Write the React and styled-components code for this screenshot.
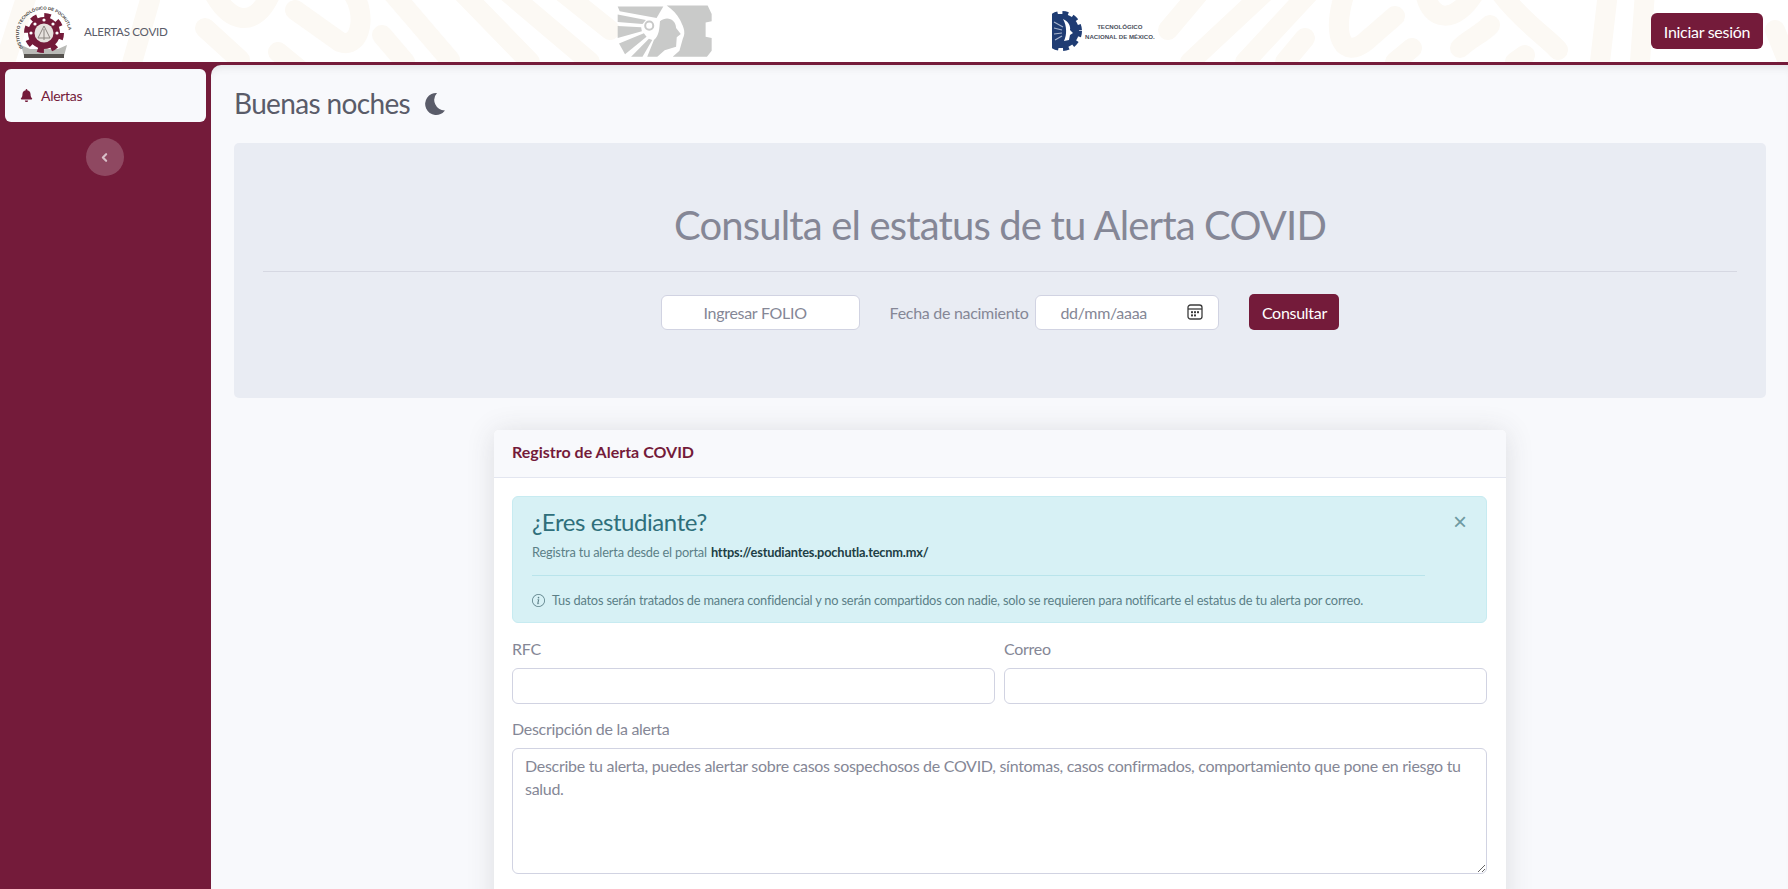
import React from 'react';
import styled, { createGlobalStyle } from 'styled-components';
import { FaBell } from 'react-icons/fa';
import { BsInfoCircle } from 'react-icons/bs';
import { ChevronLeft } from 'lucide-react';

const CRIMSON = '#741b3a';
const FONT = '"Lato", "Noto Sans", "Liberation Sans", sans-serif';
const TRACKING = '-0.018em';

const GlobalStyle = createGlobalStyle`
  * { box-sizing: border-box; }
  html, body { margin: 0; padding: 0; height: 100%; overflow: hidden; }
  body { font-family: ${FONT}; letter-spacing: ${TRACKING}; background: #f8f9fc; color: #858796; }
`;

const Page = styled.div`
  display: flex;
  flex-direction: column;
  height: 889px;
  overflow: hidden;
`;

const Header = styled.header`
  position: relative;
  flex: 0 0 65px;
  display: grid;
  grid-template-columns: 617px 435px 1fr auto;
  align-items: center;
  padding-right: 25px;
  background: #fff;
  border-bottom: 3px solid ${CRIMSON};
  overflow: hidden;
`;

const Pattern = styled.svg`
  position: absolute;
  inset: 0;
  width: 100%;
  height: 62px;
`;

const Brand = styled.div`
  position: relative;
  display: flex;
  align-items: center;
  gap: 10px;
  padding-left: 14px;
  font-size: 11.6px;
  color: #5a5c69;
`;

const LogoSlot = styled.div`
  position: relative;
  display: flex;
  align-items: center;
  gap: 3px;
`;

const TecText = styled.div`
  display: flex;
  flex-direction: column;
  align-items: center;
  gap: 3px;
  font-family: "Liberation Sans", sans-serif;
  font-size: 6.1px;
  font-weight: 700;
  line-height: 7px;
  letter-spacing: 0;
  color: #4a4f5c;
`;

const LoginButton = styled.button`
  position: relative;
  grid-column: 4;
  width: 112px;
  height: 36px;
  border: 0;
  border-radius: 6px;
  background: ${CRIMSON};
  color: #fff;
  font-family: ${FONT};
  font-size: 16px;
  letter-spacing: ${TRACKING};
`;

const Body = styled.div`
  flex: 1;
  display: flex;
  min-height: 0;
  background: ${CRIMSON};
`;

const Sidebar = styled.aside`
  flex: 0 0 211px;
  display: flex;
  flex-direction: column;
  align-items: center;
  padding: 4px 5px 0;
`;

const NavItem = styled.div`
  align-self: stretch;
  display: flex;
  align-items: center;
  gap: 8px;
  height: 53px;
  padding-left: 15px;
  border-radius: 6px;
  background: #f8f9fc;
  color: ${CRIMSON};
  font-size: 14px;
`;

const Toggle = styled.button`
  display: flex;
  align-items: center;
  justify-content: center;
  width: 38px;
  height: 38px;
  margin-top: 16px;
  margin-right: 2px;
  padding: 0;
  border: 0;
  border-radius: 50%;
  background: rgba(255, 255, 255, 0.2);
  color: rgba(255, 255, 255, 0.65);
`;

const Main = styled.main`
  flex: 1;
  min-width: 0;
  padding: 21px 22px 0 23px;
  border-top-left-radius: 10px;
  background: #f8f9fc;
  box-shadow: inset 0 8px 8px -6px rgba(58, 59, 69, 0.12);
`;

const Greeting = styled.h3`
  display: flex;
  align-items: center;
  gap: 14px;
  height: 34px;
  margin: 0 0 23px;
  font-size: 28px;
  font-weight: 400;
  letter-spacing: -0.65px;
  color: #5a5c69;
`;

const Jumbotron = styled.section`
  height: 255px;
  padding: 58px 29px 0;
  border-radius: 5px;
  background: #e9ecf3;
`;

const Title = styled.h1`
  margin: 0;
  font-size: 40px;
  font-weight: 400;
  line-height: 48px;
  letter-spacing: -0.85px;
  text-align: center;
  color: #858796;
`;

const Rule = styled.hr`
  margin: 22px 0;
  border: 0;
  border-top: 1px solid #d6d8e2;
`;

const SearchRow = styled.div`
  display: flex;
  align-items: center;
  justify-content: center;
`;

const inputBase = `
  border: 1px solid #d1d3e2;
  border-radius: 6px;
  background: #fff;
  font-family: ${FONT};
  font-size: 16px;
  letter-spacing: ${TRACKING};
  color: #6e707e;
  outline: none;
  &::placeholder { color: #858796; opacity: 1; }
`;

const FolioInput = styled.input`
  ${inputBase}
  width: 199px;
  height: 35px;
  padding-right: 12px;
  text-align: center;
`;

const DateLabel = styled.label`
  margin: 0 7px 0 30px;
  font-size: 16px;
  color: #858796;
`;

const DateBox = styled.div`
  ${inputBase}
  display: flex;
  align-items: center;
  justify-content: space-between;
  width: 184px;
  height: 35px;
  padding: 0 15px 0 24px;
  color: #858796;
`;

const SearchButton = styled.button`
  width: 90px;
  height: 36px;
  margin-left: 30px;
  border: 0;
  border-radius: 5px;
  background: ${CRIMSON};
  color: #fff;
  font-family: ${FONT};
  font-size: 16px;
  letter-spacing: ${TRACKING};
`;

const Card = styled.section`
  width: 1012px;
  margin: 32px auto 0;
  border-radius: 5px;
  background: #fff;
  box-shadow: 0 2px 28px rgba(58, 59, 69, 0.15);
`;

const CardHeader = styled.div`
  display: flex;
  align-items: center;
  height: 48px;
  padding: 0 0 4px 18px;
  border-bottom: 1px solid #e3e6f0;
  border-radius: 5px 5px 0 0;
  background: #f8f9fc;
  font-size: 16px;
  font-weight: 700;
  letter-spacing: 0;
  color: ${CRIMSON};
`;

const CardBody = styled.div`
  padding: 18px 19px 40px 18px;
`;

const Alert = styled.div`
  position: relative;
  height: 127px;
  padding: 10px 61px 0 19px;
  border: 1px solid #c7ebf1;
  border-radius: 6px;
  background: #d7f1f5;
  color: #5b7f87;
  font-size: 12.8px;
  letter-spacing: -0.0145em;
`;

const AlertTitle = styled.h4`
  margin: 0 0 8px;
  font-size: 24px;
  font-weight: 400;
  line-height: 29px;
  letter-spacing: ${TRACKING};
  color: #2f6f7b;
`;

const AlertLine = styled.p`
  display: flex;
  align-items: center;
  gap: 7px;
  margin: 0;
  line-height: 16px;

  strong { margin-left: -3px; color: #1d3f46; }
`;

const AlertRule = styled.hr`
  margin: 15px 0 16px;
  border: 0;
  border-top: 1px solid #b9e4eb;
`;

const CloseButton = styled.button`
  position: absolute;
  top: 15px;
  right: 19px;
  padding: 0;
  border: 0;
  background: none;
  color: #6f9aa2;
  font-family: "Liberation Sans", sans-serif;
  font-size: 24px;
  line-height: 20px;
`;

const FieldGrid = styled.div`
  display: grid;
  grid-template-columns: 1fr 1fr;
  gap: 9px;
  margin-top: 14px;
`;

const FieldLabel = styled.label`
  display: block;
  margin-bottom: 7px;
  font-size: 16px;
  line-height: 24px;
  color: #858796;
`;

const TextInput = styled.input`
  ${inputBase}
  width: 100%;
  height: 36px;
`;

const DescriptionBlock = styled.div`
  margin-top: 13px;
`;

const Description = styled.textarea`
  ${inputBase}
  display: block;
  width: 100%;
  height: 126px;
  padding: 5px 12px;
  line-height: 23px;
  resize: vertical;
`;

const MoonIcon = () => (
  <svg width="22" height="23" viewBox="0 0 22 23">
    <path d="M13 1 A11 11 0 1 0 21 18.5 A10.5 10.5 0 0 1 13 1 Z" fill="#5a5c69" />
  </svg>
);

const ItpLogo = () => (
  <svg width="60" height="56" viewBox="0 0 60 56">
    <defs>
      <path id="itpArc" d="M9 45 A25 25 0 1 1 51 45" />
    </defs>
    <path d="M7 42 L16 46 H44 L53 42 L50 53 H10 Z" fill="#b9bab6" />
    <path d="M10 51 H50 V55 H10 Z" fill="#55524e" />
    <circle cx="30" cy="30" r="17.5" fill="none" stroke={CRIMSON} strokeWidth="5" strokeDasharray="6.4 7.3" />
    <circle cx="30" cy="30" r="16" fill={CRIMSON} />
    <circle cx="30" cy="30" r="9.5" fill="#e6e2de" />
    <path d="M30 23 L36 35 H24 Z M30 26 V37" fill="none" stroke="#8a8580" strokeWidth="1" />
    <circle cx="17" cy="30" r="1.6" fill="#fff" />
    <circle cx="43" cy="30" r="1.6" fill="#fff" />
    <circle cx="30" cy="17" r="1.6" fill="#fff" />
    <circle cx="21" cy="21" r="1.6" fill="#fff" />
    <circle cx="39" cy="21" r="1.6" fill="#fff" />
    <text fontFamily="Liberation Sans, sans-serif" fontSize="4.3" fontWeight="700" fill="#3d3a38" letterSpacing="0">
      <textPath href="#itpArc">INSTITUTO TECNOLÓGICO DE POCHUTLA</textPath>
    </text>
  </svg>
);

const SepLogo = () => (
  <svg width="95" height="53" viewBox="50 15 283 155">
    <g fill="#c9cac9">
      <path d="M52 18 H188 L168 52 L58 32 Z" />
      <path d="M52 42 L136 58 L126 70 L52 64 Z" />
      <path d="M52 76 L122 80 L124 92 L52 112 Z" />
      <path d="M56 128 L130 98 L138 108 L74 160 Z" />
      <path d="M92 168 L145 114 L155 118 L126 168 Z" />
      <path d="M178 62 C200 44 226 58 226 82 L240 100 L228 110 L226 138 L192 148 L170 168 H140 L160 118 C176 104 176 84 178 62 Z" />
      <path d="M198 15 H320 L332 40 V62 L314 66 V108 L332 112 V150 L318 168 H216 L236 150 L246 114 C258 92 244 72 238 58 C228 40 216 28 198 15 Z" />
    </g>
    <circle cx="146" cy="75" r="12" fill="none" stroke="#c9cac9" strokeWidth="6" />
  </svg>
);

const TecGear = () => (
  <svg width="30" height="46" viewBox="0 0 30 46">
    <circle cx="10" cy="23" r="17" fill="none" stroke="#1f3c73" strokeWidth="6" strokeDasharray="5.5 4.5" />
    <path d="M0 6 H10 A17 17 0 0 1 10 40 H0 Z" fill="#1f3c73" />
    <path d="M2 14 L11 19 M2 20 L10 22 M2 26 L10 25 M3 32 L10 28" stroke="#a8b4cc" strokeWidth="1.2" />
    <path d="M11 11 C16 13 19 18 18 22 L21 25 L18 27 L17 32 L12 33 C15 27 15 18 11 11 Z" fill="#fff" />
  </svg>
);

const CalendarIcon = () => (
  <svg width="16" height="16" viewBox="0 0 16 16">
    <rect x="1" y="1" width="14" height="14" rx="2.5" fill="none" stroke="#3c3c3c" strokeWidth="1.3" />
    <path d="M1 5 H15" stroke="#3c3c3c" strokeWidth="1.3" />
    <g fill="#3c3c3c">
      <rect x="4" y="7.2" width="2" height="2" />
      <rect x="7" y="7.2" width="2" height="2" />
      <rect x="10" y="7.2" width="2" height="2" />
      <rect x="4" y="10.4" width="2" height="2" />
      <rect x="7" y="10.4" width="2" height="2" />
    </g>
  </svg>
);

const App = () => (
  <Page>
    <GlobalStyle />
    <Header>
      <Pattern viewBox="0 0 1788 62" preserveAspectRatio="none">
        <g fill="none" stroke="#fcf9f4" strokeWidth="20" strokeLinecap="round">
          <path d="M5 62 L28 -8 M130 70 L150 0" />
          <path d="M212 -10 C230 25 255 28 270 -5" />
          <path d="M205 28 L240 60 M278 52 L300 70" />
          <path d="M295 10 L340 42 C362 50 368 10 350 -10" />
          <path d="M390 -10 L450 60 M382 35 L405 62" />
          <path d="M460 -10 L530 62 M505 -10 L590 62 M560 -10 L610 30" />
          <path d="M1168 30 L1200 -8 M1190 62 L1265 -8 M1245 62 L1310 -8 M1285 62 L1305 38" />
          <path d="M1345 -8 C1330 40 1345 58 1365 42 L1395 16" />
          <path d="M1425 -8 C1430 22 1455 25 1475 -8" />
          <path d="M1460 48 C1470 38 1482 34 1490 25" />
          <path d="M1395 62 L1412 48 M1515 62 L1525 55" />
          <path d="M1500 -8 C1520 20 1550 40 1558 50" />
          <path d="M1600 62 L1608 -8 M1640 62 L1645 -8 M1775 30 L1788 62" />
        </g>
      </Pattern>
      <Brand>
        <ItpLogo />
        ALERTAS COVID
      </Brand>
      <LogoSlot>
        <SepLogo />
      </LogoSlot>
      <LogoSlot>
        <TecGear />
        <TecText>
          <span>TECNOLÓGICO</span>
          <span>NACIONAL DE MÉXICO.</span>
        </TecText>
      </LogoSlot>
      <LoginButton>Iniciar sesión</LoginButton>
    </Header>
    <Body>
      <Sidebar>
        <NavItem>
          <FaBell size={13} />
          Alertas
        </NavItem>
        <Toggle>
          <ChevronLeft size={13} strokeWidth={4} />
        </Toggle>
      </Sidebar>
      <Main>
        <Greeting>
          Buenas noches
          <MoonIcon />
        </Greeting>
        <Jumbotron>
          <Title>Consulta el estatus de tu Alerta COVID</Title>
          <Rule />
          <SearchRow>
            <FolioInput placeholder="Ingresar FOLIO" />
            <DateLabel>Fecha de nacimiento</DateLabel>
            <DateBox>
              dd/mm/aaaa
              <CalendarIcon />
            </DateBox>
            <SearchButton>Consultar</SearchButton>
          </SearchRow>
        </Jumbotron>
        <Card>
          <CardHeader>Registro de Alerta COVID</CardHeader>
          <CardBody>
            <Alert>
              <AlertTitle>¿Eres estudiante?</AlertTitle>
              <AlertLine>
                Registra tu alerta desde el portal
                <strong>https://estudiantes.pochutla.tecnm.mx/</strong>
              </AlertLine>
              <AlertRule />
              <AlertLine>
                <BsInfoCircle size={13} />
                Tus datos serán tratados de manera confidencial y no serán compartidos con nadie, solo se requieren para notificarte el estatus de tu alerta por correo.
              </AlertLine>
              <CloseButton>×</CloseButton>
            </Alert>
            <FieldGrid>
              <div>
                <FieldLabel>RFC</FieldLabel>
                <TextInput />
              </div>
              <div>
                <FieldLabel>Correo</FieldLabel>
                <TextInput />
              </div>
            </FieldGrid>
            <DescriptionBlock>
              <FieldLabel>Descripción de la alerta</FieldLabel>
              <Description placeholder="Describe tu alerta, puedes alertar sobre casos sospechosos de COVID, síntomas, casos confirmados, comportamiento que pone en riesgo tu salud." />
            </DescriptionBlock>
          </CardBody>
        </Card>
      </Main>
    </Body>
  </Page>
);

export default App;
